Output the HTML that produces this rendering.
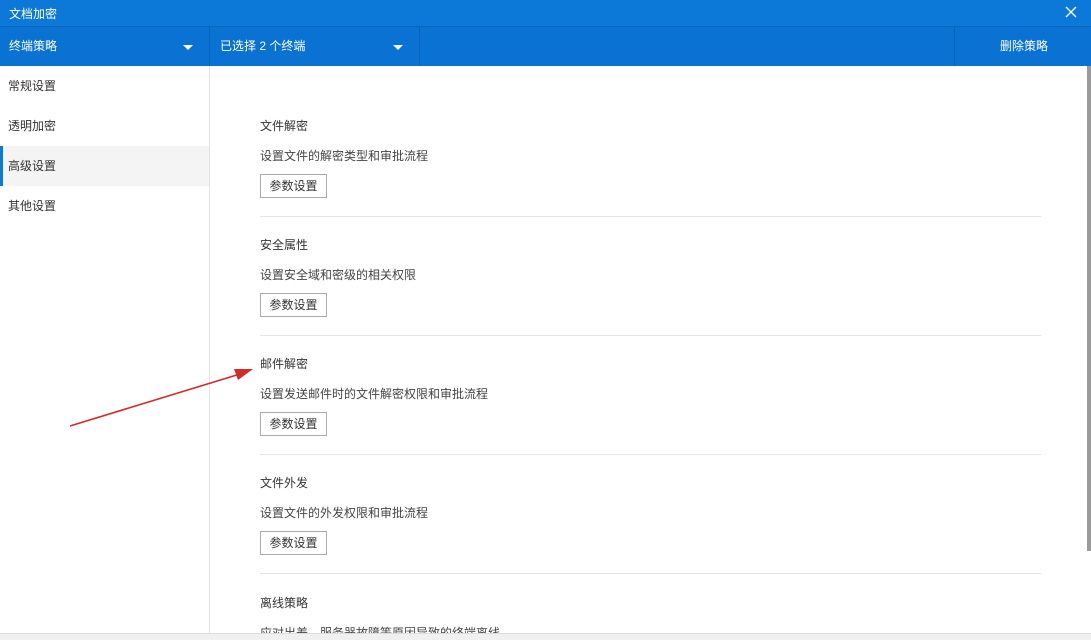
<!DOCTYPE html>
<html><head><meta charset="utf-8"><style>
*{margin:0;padding:0;box-sizing:border-box}
body{width:1091px;height:640px;overflow:hidden;background:#fff;font-family:"Liberation Sans","Noto Sans CJK SC",sans-serif;font-size:12px;color:#333;position:relative}
.t{position:absolute;left:0;top:0;width:1091px;height:26px;background:#0c79d9;color:#fff;}
.t span{position:absolute;left:9px;top:5px;font-size:12px}
.tb{position:absolute;left:0;top:26px;width:1091px;height:40px;background:#0a72d2;color:#fff;border-top:1px solid #0866bd}
.tb div{position:absolute;top:0;height:39px;line-height:39px;font-size:12px}
.tri{position:absolute;top:18px;width:0;height:0;border-left:5px solid transparent;border-right:5px solid transparent;border-top:5px solid #fff}
.side{position:absolute;left:0;top:66px;width:210px;height:567px;border-right:1px solid #e4e4e4}
.side div{height:40px;line-height:40px;padding-left:8px;font-size:12px;color:#333}
.side .a{background:#f4f4f4;border-left:3px solid #0c79d9;padding-left:5px}
.sec{position:absolute;left:260px;width:781px}
.sec h4{font-weight:normal;font-size:12px;position:absolute;top:0;left:0}
.sec p{position:absolute;top:30px;left:0;font-size:12px;color:#444}
.sec .b{position:absolute;top:57px;left:0;width:67px;height:24px;border:1px solid #aaa;text-align:center;line-height:22px;font-size:12px}
.sec hr{position:absolute;top:99px;left:0;width:781px;border:0;border-top:1px solid #e6e6e6}
</style></head><body>
<div class="t"><span>文档加密</span><svg style="position:absolute;left:1065px;top:6px" width="12" height="12"><path d="M1 1L11 11M11 1L1 11" stroke="#fff" stroke-width="1.3"/></svg></div>
<div class="tb">
<div style="left:9px">终端策略</div><span class="tri" style="left:183px"></span>
<div style="left:209px;width:1px;background:#0862b8"></div>
<div style="left:220px">已选择 2 个终端</div><span class="tri" style="left:393px"></span>
<div style="left:419px;width:1px;background:#0862b8"></div>
<div style="left:954px;width:1px;background:#0862b8"></div>
<div style="left:1000px">删除策略</div>
</div>
<div class="side"><div>常规设置</div><div>透明加密</div><div class="a">高级设置</div><div>其他设置</div></div>
<div style="position:absolute;left:1087px;top:66px;width:4px;height:485px;background:#9a9a9a"></div>
<div class="sec" style="top:117px"><h4>文件解密</h4><p>设置文件的解密类型和审批流程</p><div class="b">参数设置</div><hr></div>
<div class="sec" style="top:236px"><h4>安全属性</h4><p>设置安全域和密级的相关权限</p><div class="b">参数设置</div><hr></div>
<div class="sec" style="top:355px"><h4>邮件解密</h4><p>设置发送邮件时的文件解密权限和审批流程</p><div class="b">参数设置</div><hr></div>
<div class="sec" style="top:474px"><h4>文件外发</h4><p>设置文件的外发权限和审批流程</p><div class="b">参数设置</div><hr></div>
<div class="sec" style="top:594px"><h4>离线策略</h4><p>应对出差、服务器故障等原因导致的终端离线</p></div>
<div style="position:absolute;left:0;top:633px;width:1091px;height:7px;background:#f0f0f0;border-top:1px solid #ddd"></div>
<svg style="position:absolute;left:0;top:0" width="1091" height="640"><path d="M70 426L240 374" stroke="#d42a2a" stroke-width="1.6"/><path d="M253 369L234 369L238 380Z" fill="#d42a2a"/></svg>
</body></html>
